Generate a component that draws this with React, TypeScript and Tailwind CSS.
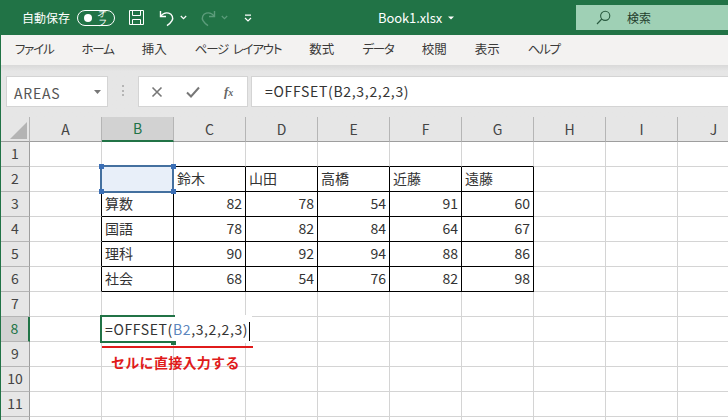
import { Fragment } from "react"

const font = "font-['Noto_Sans_CJK_JP','Noto_Sans',sans-serif]"

const menus = [
  { label: "ファイル", kana: true },
  { label: "ホーム", kana: true },
  { label: "挿入", kana: false },
  { label: "ページ レイアウト", kana: true },
  { label: "数式", kana: false },
  { label: "データ", kana: true },
  { label: "校閲", kana: false },
  { label: "表示", kana: false },
  { label: "ヘルプ", kana: true },
]
const columns = ["A", "B", "C", "D", "E", "F", "G", "H", "I", "J"]
const rowCount = 12

const table: Record<number, string[]> = {
  2: ["", "鈴木", "山田", "高橋", "近藤", "遠藤"],
  3: ["算数", "82", "78", "54", "91", "60"],
  4: ["国語", "78", "82", "84", "64", "67"],
  5: ["理科", "90", "92", "94", "88", "86"],
  6: ["社会", "68", "54", "76", "82", "98"],
}

function SaveIcon() {
  return (
    <svg width="17" height="17" viewBox="0 0 17 17" fill="none" stroke="#fff" strokeWidth="1">
      <path d="M1.5 1.5h14v14h-14z" />
      <path d="M4.5 1.5v5h8v-5M4.5 15.5v-5h8v5" />
    </svg>
  )
}

function UndoIcon({ color }: { color: string }) {
  return (
    <svg width="16" height="18" viewBox="0 0 16 18" fill="none" stroke={color} strokeWidth="1.4">
      <path d="M1.5 2v5.5H7" />
      <path d="M1.8 7.2C4 4.2 7 3.4 9.8 4.2c3.4 1 4.8 4.6 3.2 7.4-1 1.8-2.8 3.4-5 5" />
    </svg>
  )
}

function RedoIcon({ color }: { color: string }) {
  return (
    <svg width="16" height="18" viewBox="0 0 16 18" fill="none" stroke={color} strokeWidth="1.4">
      <path d="M14.5 2v5.5H9" />
      <path d="M14.2 7.2C12 4.2 9 3.4 6.2 4.2c-3.4 1-4.8 4.6-3.2 7.4 1 1.8 2.8 3.4 5 5" />
    </svg>
  )
}

function Chevron({ color }: { color: string }) {
  return (
    <svg width="7" height="5" viewBox="0 0 7 5" fill="none" stroke={color} strokeWidth="1.2">
      <path d="M.8 1l2.7 2.6L6.2 1" />
    </svg>
  )
}

function TopBar() {
  return (
    <div className="flex h-[35px] items-center bg-[#217346] text-white">
      <span className="ml-[22px] w-[55px] text-[12px]">自動保存</span>
      <div className="flex h-[16px] w-[38px] items-center rounded-full border border-white pl-[6px]">
        <span className="h-[8px] w-[8px] rounded-full bg-white" />
        <span className="ml-[5px] text-[9px] italic leading-none">オフ</span>
      </div>
      <div className="ml-[13px]">
        <SaveIcon />
      </div>
      <div className="ml-[14px]">
        <UndoIcon color="#fff" />
      </div>
      <div className="ml-[5px]">
        <Chevron color="#fff" />
      </div>
      <div className="ml-[13px]">
        <RedoIcon color="#5c9c7b" />
      </div>
      <div className="ml-[5px]">
        <Chevron color="#5c9c7b" />
      </div>
      <svg className="ml-[16px]" width="8" height="8" viewBox="0 0 8 8" fill="none" stroke="#fff" strokeWidth="1.2">
        <path d="M1 1.2h6M1 4l3 3 3-3" />
      </svg>
      <span className="ml-[126px] text-[13px] tracking-[-0.1px]">Book1.xlsx</span>
      <svg className="ml-[6px]" width="6" height="4" viewBox="0 0 6 4" fill="#fff">
        <path d="M0 .5h6L3 3.5z" />
      </svg>
      <div className="ml-auto mb-[5px] mt-[5px] flex h-[25px] w-[152px] items-center bg-[#9fd0b5] pl-[20px] text-[#1f3d2c]">
        <svg width="15" height="15" viewBox="0 0 15 15" fill="none" stroke="#2a5a40" strokeWidth="1.1">
          <circle cx="9.2" cy="5.8" r="4.6" />
          <path d="M5.8 9L1 14" />
        </svg>
        <span className="ml-[16px] text-[12px]">検索</span>
      </div>
    </div>
  )
}

function MenuBar() {
  return (
    <div className="flex h-[30px] items-center gap-[28px] bg-[#f3f2f1] pb-[1px] pl-[14px] text-[12.5px] text-[#3b3a39] [font-feature-settings:'palt'] [word-spacing:3px]">
      {menus.map((menu) => (
        <span key={menu.label} className={menu.kana ? "tracking-[-1.2px]" : ""}>
          {menu.label}
        </span>
      ))}
    </div>
  )
}

function FormulaBar() {
  return (
    <div className="flex h-[52px] bg-[#e6e6e6] bg-gradient-to-b from-[#d9d9d9] from-0% to-[#e6e6e6] to-[12%] pt-[11px]">
      <div className="ml-[5px] flex h-[31px] w-[102px] items-center justify-between border border-[#d4d4d4] bg-white pl-[7px] pr-[6px]">
        <span className="pt-[3px] text-[14px] tracking-[0.8px] text-[#555]">AREAS</span>
        <svg width="7" height="4" viewBox="0 0 7 4" fill="#777">
          <path d="M0 0h7L3.5 4z" />
        </svg>
      </div>
      <div className="ml-[14px] mt-[9px] flex h-[11px] w-[2px] flex-col justify-between">
        <span className="h-[2px] w-[2px] bg-[#b5b5b5]" />
        <span className="h-[2px] w-[2px] bg-[#b5b5b5]" />
        <span className="h-[2px] w-[2px] bg-[#b5b5b5]" />
      </div>
      <div className="ml-[14px] flex h-[31px] w-[110px] items-center border border-[#d4d4d4] bg-white pl-[12px]">
        <svg width="12" height="12" viewBox="0 0 12 12" fill="none" stroke="#777" strokeWidth="1.6">
          <path d="M1.5 1.5l9 9M10.5 1.5l-9 9" />
        </svg>
        <svg className="ml-[23px]" width="14" height="12" viewBox="0 0 14 12" fill="none" stroke="#777" strokeWidth="2">
          <path d="M1 6.5l4 4L13 1.5" />
        </svg>
        <span className="ml-[24px] font-['Liberation_Serif',serif] text-[13px] font-bold italic leading-none text-[#666]">
          f<span className="text-[10px]">x</span>
        </span>
      </div>
      <div className="ml-[3px] flex h-[31px] flex-1 items-center border border-r-0 border-[#d4d4d4] bg-white pl-[13px] text-[14px] tracking-[0.68px] text-[#333]">
        =OFFSET(B2,3,2,2,3)
      </div>
    </div>
  )
}

function ColumnHeader({ name }: { name: string }) {
  const active = name === "B"
  return (
    <div
      className={
        active
          ? "flex h-[25px] w-[72px] shrink-0 items-center justify-center border-b-2 border-r border-b-[#217346] border-r-[#b5b5b5] bg-[#d2d2d2] text-[14px] text-[#217346]"
          : "flex h-[25px] w-[72px] shrink-0 items-center justify-center border-b border-r border-b-[#9e9e9e] border-r-[#b5b5b5] bg-[#e6e6e6] text-[14px] text-[#444]"
      }
    >
      {name}
    </div>
  )
}

function cellBorder(row: number, col: number) {
  const inTable = row >= 2 && row <= 6 && col >= 1 && col <= 6
  const right = inTable || (col === 0 && row >= 2 && row <= 6)
  const bottom = inTable || (row === 1 && col >= 1 && col <= 6)
  return [right ? "border-r-black" : "border-r-[#d4d4d4]", bottom ? "border-b-black" : "border-b-[#d4d4d4]"].join(" ")
}

function Cell({ row, col }: { row: number; col: number }) {
  const value = col >= 1 ? table[row]?.[col - 1] : undefined
  const numeric = value !== undefined && /^\d+$/.test(value)
  return (
    <div
      className={`flex h-[25px] w-[72px] shrink-0 items-center overflow-hidden border-b border-r bg-white pb-[1px] text-[14px] text-[#333] ${
        numeric ? "justify-end pr-[3px]" : "pl-[3px]"
      } ${cellBorder(row, col)}`}
    >
      {value}
    </div>
  )
}

function Grid() {
  return (
    <div>
      <div className="flex">
        <div className="relative h-[25px] w-[29px] shrink-0 border-b border-r border-b-[#9e9e9e] border-r-[#b5b5b5] bg-[#e6e6e6]">
          <svg className="absolute left-[9px] top-[5px]" width="17" height="17" viewBox="0 0 17 17" fill="#b4b4b4">
            <path d="M17 0v17H0z" />
          </svg>
        </div>
        {columns.map((name) => (
          <ColumnHeader key={name} name={name} />
        ))}
      </div>
      {Array.from({ length: rowCount }, (_, i) => i + 1).map((row) => (
        <div key={row} className="flex">
          {row === 8 ? (
            <div className="flex h-[25px] w-[29px] shrink-0 items-center justify-center border-b border-r-2 border-b-[#b5b5b5] border-r-[#217346] bg-[#d2d2d2] pb-[2px] text-[14px] text-[#217346]">
              {row}
            </div>
          ) : (
            <div className="flex h-[25px] w-[29px] shrink-0 items-center justify-center border-b border-r border-b-[#b5b5b5] border-r-[#9e9e9e] bg-[#e6e6e6] pb-[2px] text-[14px] text-[#444]">
              {row < rowCount ? row : null}
            </div>
          )}
          {columns.map((name, col) => (
            <Fragment key={name}>
              <Cell row={row} col={col} />
            </Fragment>
          ))}
        </div>
      ))}
    </div>
  )
}

function RangeSelection() {
  const handle = "absolute h-[5px] w-[5px] bg-[#3b6fb6]"
  return (
    <div className="absolute left-[100px] top-[165px] h-[28px] w-[74px] border-2 border-[#44709f] bg-[#e8eff9]">
      <span className={`${handle} left-[-3px] top-[-3px]`} />
      <span className={`${handle} right-[-4px] top-[-3px]`} />
      <span className={`${handle} bottom-[-3px] left-[-3px]`} />
      <span className={`${handle} bottom-[-3px] right-[-4px]`} />
    </div>
  )
}

function CellEditor() {
  return (
    <>
      <div className="absolute left-[100px] top-[315px] flex h-[28px] w-[152px] items-center border-y-2 border-l-2 border-r-0 border-y-transparent border-l-[#217346] bg-white pl-[3px] text-[14px] tracking-[0.62px] text-[#333]">
        <span>
          =OFFSET(<span className="text-[#5b86bd]">B2</span>,3,2,2,3)
        </span>
        <span className="ml-[1px] h-[19px] w-px self-end bg-black" />
      </div>
      <div className="absolute left-[100px] top-[315px] h-[2px] w-[75px] bg-[#217346]" />
      <div className="absolute left-[100px] top-[341px] h-[2px] w-[71px] bg-[#217346]" />
      <div className="absolute left-[171px] top-[341px] h-[4px] w-[5px] bg-[#217346]" />
      <div className="absolute left-[102px] top-[346px] h-[2px] w-[151px] bg-[#e01b1b]" />
      <div className="absolute left-[111px] top-[352px] text-[14px] font-bold leading-[20px] tracking-[0.3px] text-[#e01b1b]">
        セルに直接入力する
      </div>
    </>
  )
}

export default function App() {
  return (
    <div className={`relative h-[420px] w-[728px] overflow-hidden bg-white ${font}`}>
      <TopBar />
      <div className="border-l border-[#217346]">
        <MenuBar />
        <FormulaBar />
        <Grid />
      </div>
      <RangeSelection />
      <CellEditor />
    </div>
  )
}
